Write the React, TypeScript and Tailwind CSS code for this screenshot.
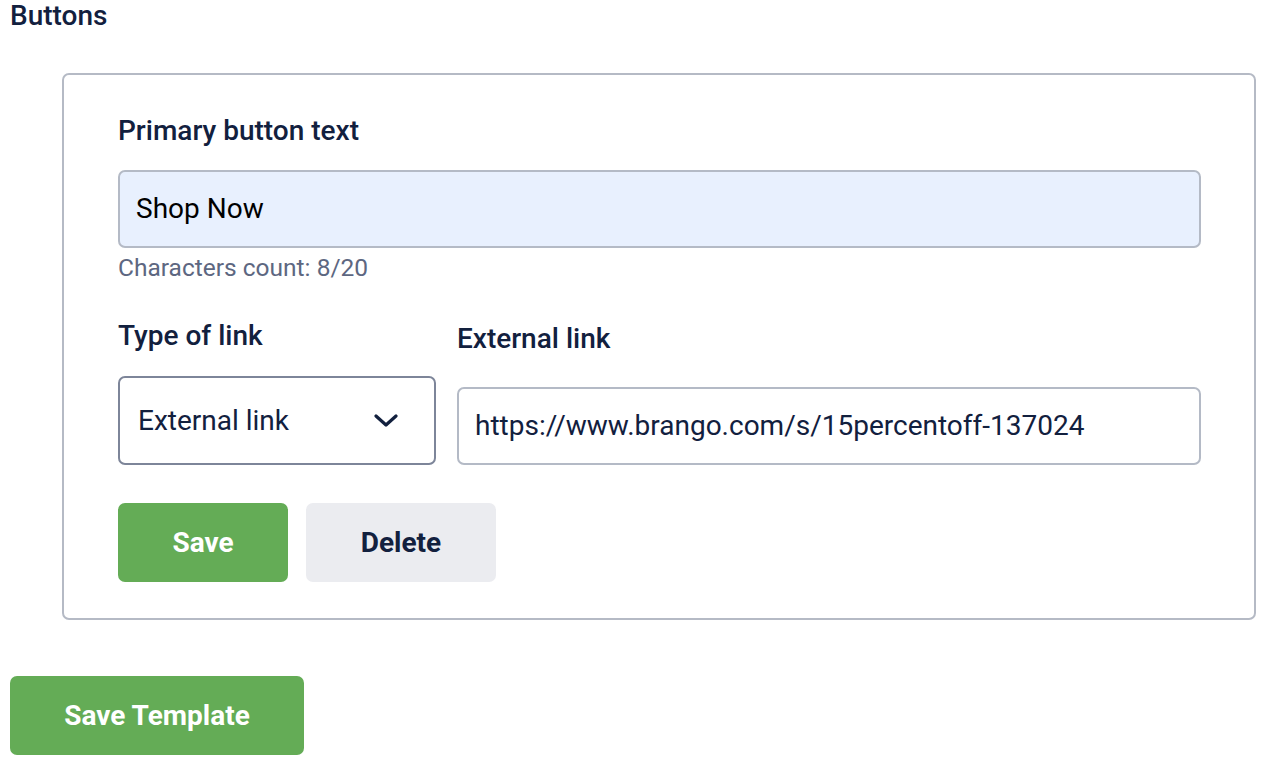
export default function App() {
  return (
    <div className="min-h-screen bg-white px-[10px] font-['Roboto',sans-serif] text-[#12203e]">
      <h2 className="text-[28px] leading-[32px] font-medium">Buttons</h2>
      <div className="mt-[41px] ml-[52px] mr-[4px] rounded-[7px] border-2 border-[#b5bac5] pl-[54px] pr-[53px] pt-[40px] pb-[36px]">
        <label className="block text-[28px] leading-[32px] font-medium">Primary button text</label>
        <div className="mt-[23px] flex h-[78px] items-center rounded-[7px] border-2 border-[#b4bac6] bg-[#e8f0fe] pl-[16px] text-[28px] text-black">
          Shop Now
        </div>
        <div className="mt-[6px] text-[24.5px] leading-[28px] text-[#5d6781]">Characters count: 8/20</div>
        <div className="mt-[38px] flex items-end gap-[21px]">
          <div className="w-[318px] shrink-0">
            <label className="block text-[28px] leading-[32px] font-medium">Type of link</label>
            <div className="mt-[24px] flex h-[89px] items-center justify-between rounded-[7px] border-2 border-[#7d8599] pl-[18px] pr-[36px] text-[28px]">
              <span>External link</span>
              <svg width="24" height="14" viewBox="0 0 24 14" fill="none">
                <path d="M2 2L12 11L22 2" stroke="#12203e" strokeWidth="3.2" strokeLinecap="round" strokeLinejoin="round" />
              </svg>
            </div>
          </div>
          <div className="flex-1">
            <label className="block text-[28px] leading-[32px] font-medium">External link</label>
            <div className="mt-[32px] flex h-[78px] items-center rounded-[7px] border-2 border-[#b4bac6] pl-[16px] text-[28px]">
              https://www.brango.com/s/15percentoff-137024
            </div>
          </div>
        </div>
        <div className="mt-[38px] flex gap-[18px]">
          <button className="h-[79px] w-[170px] rounded-[7px] bg-[#64ac56] text-[28px] font-bold text-white">Save</button>
          <button className="h-[79px] w-[190px] rounded-[7px] bg-[#ebecf0] text-[28px] font-bold text-[#12203e]">Delete</button>
        </div>
      </div>
      <button className="mt-[56px] h-[79px] w-[294px] rounded-[7px] bg-[#64ac56] text-[28px] font-bold text-white">Save Template</button>
    </div>
  );
}
